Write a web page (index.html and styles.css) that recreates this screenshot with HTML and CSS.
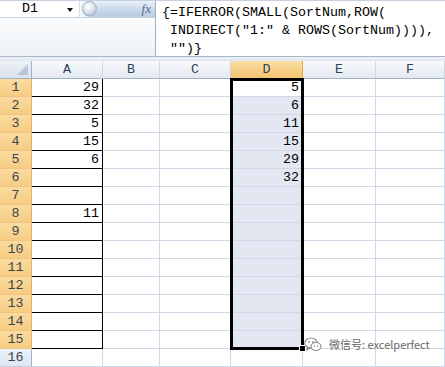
FILE: index.html
```html
<!DOCTYPE html>
<html>
<head>
<meta charset="utf-8">
<link rel="stylesheet" href="styles.css">
</head>
<body>
<div class="app">
  <div class="fbar">
    <div class="left">
      <div class="toprow">
        <div class="namebox"><span class="nm">D1</span><span class="dd"></span></div>
        <div class="fxbar"><span class="knob"></span><span class="fx">fx</span></div>
      </div>
      <div class="leftfill"></div>
    </div>
    <div class="formula">{=IFERROR(SMALL(SortNum,ROW(
 INDIRECT("1:" &amp; ROWS(SortNum)))),
 "")}</div>
  </div>
  <div class="gap"></div>
  <div class="sheet">
    <div class="corner"><span class="tri"></span></div>
    <div class="ch">A</div><div class="ch">B</div><div class="ch">C</div><div class="ch sel">D</div><div class="ch">E</div><div class="ch">F</div>

    <div class="rh sel">1</div><div class="c a n">29</div><div class="c"></div><div class="c"></div><div class="c n act">5</div><div class="c"></div><div class="c"></div>
    <div class="rh sel">2</div><div class="c a n">32</div><div class="c"></div><div class="c"></div><div class="c d n">6</div><div class="c"></div><div class="c"></div>
    <div class="rh sel">3</div><div class="c a n">5</div><div class="c"></div><div class="c"></div><div class="c d n">11</div><div class="c"></div><div class="c"></div>
    <div class="rh sel">4</div><div class="c a n">15</div><div class="c"></div><div class="c"></div><div class="c d n">15</div><div class="c"></div><div class="c"></div>
    <div class="rh sel">5</div><div class="c a n">6</div><div class="c"></div><div class="c"></div><div class="c d n">29</div><div class="c"></div><div class="c"></div>
    <div class="rh sel">6</div><div class="c a"></div><div class="c"></div><div class="c"></div><div class="c d n">32</div><div class="c"></div><div class="c"></div>
    <div class="rh sel">7</div><div class="c a"></div><div class="c"></div><div class="c"></div><div class="c d"></div><div class="c"></div><div class="c"></div>
    <div class="rh sel">8</div><div class="c a n">11</div><div class="c"></div><div class="c"></div><div class="c d"></div><div class="c"></div><div class="c"></div>
    <div class="rh sel">9</div><div class="c a"></div><div class="c"></div><div class="c"></div><div class="c d"></div><div class="c"></div><div class="c"></div>
    <div class="rh sel">10</div><div class="c a"></div><div class="c"></div><div class="c"></div><div class="c d"></div><div class="c"></div><div class="c"></div>
    <div class="rh sel">11</div><div class="c a"></div><div class="c"></div><div class="c"></div><div class="c d"></div><div class="c"></div><div class="c"></div>
    <div class="rh sel">12</div><div class="c a"></div><div class="c"></div><div class="c"></div><div class="c d"></div><div class="c"></div><div class="c"></div>
    <div class="rh sel">13</div><div class="c a"></div><div class="c"></div><div class="c"></div><div class="c d"></div><div class="c"></div><div class="c"></div>
    <div class="rh sel">14</div><div class="c a"></div><div class="c"></div><div class="c"></div><div class="c d"></div><div class="c"></div><div class="c"></div>
    <div class="rh sel">15</div><div class="c a"></div><div class="c"></div><div class="c"></div><div class="c d"></div><div class="c"></div><div class="c"></div>
    <div class="rh">16</div><div class="c"></div><div class="c"></div><div class="c"></div><div class="c"></div><div class="c"></div><div class="c"></div>

    <div class="selbox"><span class="handle"></span></div>
  </div>
  <div class="wm">
    <svg class="wmicon" width="18" height="15" viewBox="0 0 18 15">
      <ellipse cx="7" cy="6" rx="6.2" ry="5" fill="none" stroke="#8a8a8a" stroke-width="1.1"/>
      <path d="M3.5 10 L3 13 L6 10.8" fill="none" stroke="#8a8a8a" stroke-width="1.1"/>
      <ellipse cx="12" cy="9.5" rx="5" ry="4" fill="#fff" stroke="#8a8a8a" stroke-width="1.1"/>
      <circle cx="5" cy="5" r="0.9" fill="#8a8a8a"/>
      <circle cx="9" cy="5" r="0.9" fill="#8a8a8a"/>
      <circle cx="10.5" cy="9" r="0.7" fill="#8a8a8a"/>
      <circle cx="13.5" cy="9" r="0.7" fill="#8a8a8a"/>
    </svg>
    <span class="wmtext">微信号: excelperfect</span>
  </div>
</div>
</body>
</html>
```

FILE: styles.css
```css
html, body {
  margin: 0;
  padding: 0;
  background: #fff;
}
.app {
  width: 445px;
  height: 367px;
  overflow: hidden;
  position: relative;
  font-family: "Liberation Mono", "DejaVu Sans Mono", monospace;
  font-size: 13.33px;
  color: #000;
}

/* formula bar */
.fbar {
  display: flex;
  height: 57px;
  box-sizing: border-box;
  border-top: 1px solid #c5d1de;
  border-bottom: 1px solid #a9b8c9;
  background: #f3f6fa;
}
.left {
  width: 155px;
  display: flex;
  flex-direction: column;
}
.toprow {
  display: flex;
  height: 17px;
  box-sizing: border-box;
  border-bottom: 1px solid #c8d2de;
}
.namebox {
  width: 80px;
  background: #fff;
  position: relative;
  display: flex;
  align-items: center;
  box-sizing: border-box;
  border-right: 1px solid #d7dee7;
}
.nm {
  margin-left: 22px;
  line-height: 16px;
}
.dd {
  position: absolute;
  left: 67px;
  top: 7px;
  width: 0;
  height: 0;
  border-left: 3.5px solid transparent;
  border-right: 3.5px solid transparent;
  border-top: 4px solid #111;
}
.fxbar {
  margin-left: 2px;
  flex: 1;
  height: 16px;
  border-radius: 8px 0 0 8px;
  background: linear-gradient(#e9f0f9, #c9d8ea 55%, #b9cbe2);
  position: relative;
}
.knob {
  position: absolute;
  left: 0;
  top: 0;
  width: 15px;
  height: 15px;
  box-sizing: border-box;
  border-radius: 50%;
  border: 1px solid #9fb0c4;
  background: radial-gradient(circle at 40% 35%, #ffffff, #dfe6ee 45%, #a9b6c6 100%);
}
.fx {
  position: absolute;
  right: 4px;
  top: 0;
  font-family: "Liberation Serif", serif;
  font-style: italic;
  font-size: 13px;
  line-height: 15px;
  color: #5a6d86;
}
.leftfill {
  flex: 1;
  background: linear-gradient(#fbfcfd, #eef2f7);
}
.formula {
  flex: 1;
  background: #fff;
  border-left: 1px solid #9fb1c6;
  white-space: pre;
  line-height: 18px;
  padding: 3px 0 0 6px;
  color: #000;
}
.gap {
  height: 4px;
  background: linear-gradient(#eef2f7, #dfe6ef);
  border-bottom: 1px solid #b6c3d3;
}

/* sheet */
.sheet {
  display: grid;
  grid-template-columns: 32px 71px 57px 71px 72px 73px 69px;
  grid-template-rows: repeat(17, 18px);
  margin-top: -1px;
  position: relative;
}
.corner {
  background: linear-gradient(#edf1f6, #d9e1eb);
  border-right: 1px solid #9eb2c8;
  border-bottom: 1px solid #9eb2c8;
  box-sizing: border-box;
  position: relative;
}
.tri {
  position: absolute;
  right: 3px;
  bottom: 3px;
  width: 0;
  height: 0;
  border-left: 11px solid transparent;
  border-bottom: 11px solid #b7c6d8;
}
.ch {
  box-sizing: border-box;
  background: linear-gradient(#f8fafc, #e4e9f0);
  border-right: 1px solid #cdd5df;
  border-bottom: 1px solid #9eb2c8;
  text-align: center;
  line-height: 18px;
  color: #2f4158;
}
.ch.sel {
  background: linear-gradient(#fbdea6, #f4c46e);
  border-right-color: #e3a94a;
  border-bottom-color: #e3a94a;
}
.rh {
  box-sizing: border-box;
  background: linear-gradient(#ebf0f7, #dfe7f2);
  border-right: 1px solid #9eb2c8;
  border-bottom: 1px solid #c7d2df;
  text-align: center;
  line-height: 18px;
  color: #3a4550;
}
.rh.sel {
  background: linear-gradient(#fbdba0, #f6cc82);
  border-right-color: #e5b060;
  border-bottom-color: #eec383;
}
.c {
  box-sizing: border-box;
  border-right: 1px solid #d0d7e5;
  border-bottom: 1px solid #d0d7e5;
  line-height: 18px;
  padding-right: 3px;
}
.c.n {
  text-align: right;
}
.c.a {
  border-right: 1px solid #000;
  border-bottom: 1px solid #000;
}
.c.d {
  background: #e3e7f2;
}
.c.act {
  background: #fff;
}
.selbox {
  position: absolute;
  left: 230px;
  top: 17px;
  width: 74px;
  height: 272px;
  box-sizing: border-box;
  border: 3px solid #000;
  pointer-events: none;
}
.handle {
  position: absolute;
  right: -5px;
  bottom: -5px;
  width: 5px;
  height: 5px;
  background: #000;
  border: 1px solid #fff;
}

/* watermark */
.wm {
  position: absolute;
  left: 304px;
  top: 337px;
  display: flex;
  align-items: center;
  gap: 7px;
}
.wmicon {
  display: block;
}
.wmtext {
  font-family: "Noto Sans CJK SC", "Noto Sans", sans-serif;
  font-size: 11px;
  line-height: 15px;
  color: #666;
  text-shadow: 0 0 2px #fff, 0 0 2px #fff;
}
```
